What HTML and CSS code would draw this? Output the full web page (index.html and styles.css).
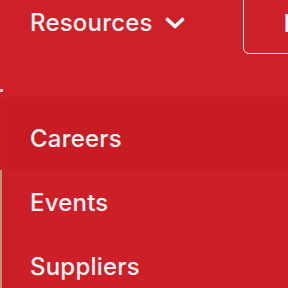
FILE: index.html
```html
<!DOCTYPE html>
<html lang="en">
<head>
<meta charset="utf-8">
<link rel="stylesheet" href="styles.css">
</head>
<body>
<div class="page">
  <header class="topbar">
    <a class="nav-item">
      <span class="nav-label">Resources</span>
      <svg class="chev" width="20" height="12" viewBox="0 0 20 12"><path d="M2.5 2.5 L10 9.5 L17.5 2.5" fill="none" stroke="#fff" stroke-width="3.6" stroke-linecap="round" stroke-linejoin="round"/></svg>
    </a>
    <div class="cta"><span class="cta-label">D</span></div>
  </header>
  <div class="lower">
    <div class="edge"><span class="tick"></span><span class="tan"></span></div>
    <ul class="menu">
      <li class="menu-item active">Careers</li>
      <li class="menu-item">Events</li>
      <li class="menu-item">Suppliers</li>
    </ul>
  </div>
</div>
</body>
</html>
```

FILE: styles.css
```css
html, body {
  margin: 0;
  padding: 0;
  width: 288px;
  height: 288px;
  overflow: hidden;
  background: #cd2029;
}
.page {
  font-family: Inter, "Noto Sans", sans-serif;
  color: #fdf3f3;
  width: 288px;
  height: 288px;
  overflow: hidden;
}
.topbar {
  display: flex;
  align-items: flex-start;
  height: 97px;
  padding-left: 30px;
}
.nav-item {
  display: flex;
  align-items: center;
  gap: 12px;
  height: 44px;
}
.nav-label {
  font-size: 24px;
  font-weight: 500;
  letter-spacing: 0.2px;
}
.chev {
  display: block;
  margin-top: 1px;
}
.cta {
  flex: none;
  margin-left: 58px;
  margin-top: -10px;
  width: 120px;
  height: 64px;
  border: 1.5px solid #fbe9ea;
  border-radius: 6px;
  box-sizing: border-box;
  padding: 18px 0 0 40px;
}
.cta-label {
  font-size: 24px;
  font-weight: 600;
}
.lower {
  display: flex;
}
.edge {
  width: 8px;
  flex: none;
  display: flex;
  flex-direction: column;
  background: #c91e27;
}
.tick {
  display: block;
  width: 3px;
  height: 3px;
  margin-top: -8px;
  background: #f1c9c9;
}
.tan {
  display: block;
  width: 1.5px;
  height: 120px;
  margin-top: 78px;
  background: #c8926a;
}
.menu {
  list-style: none;
  margin: 0;
  padding: 0;
  flex: 1;
  background: #cc1f28;
}
.menu-item {
  height: 64px;
  display: flex;
  align-items: center;
  padding-left: 22px;
  font-size: 24px;
  font-weight: 500;
  letter-spacing: 0.2px;
}
.menu-item.active {
  height: 73px;
  padding-top: 9px;
  box-sizing: border-box;
  background: #c71c23;
}
```
